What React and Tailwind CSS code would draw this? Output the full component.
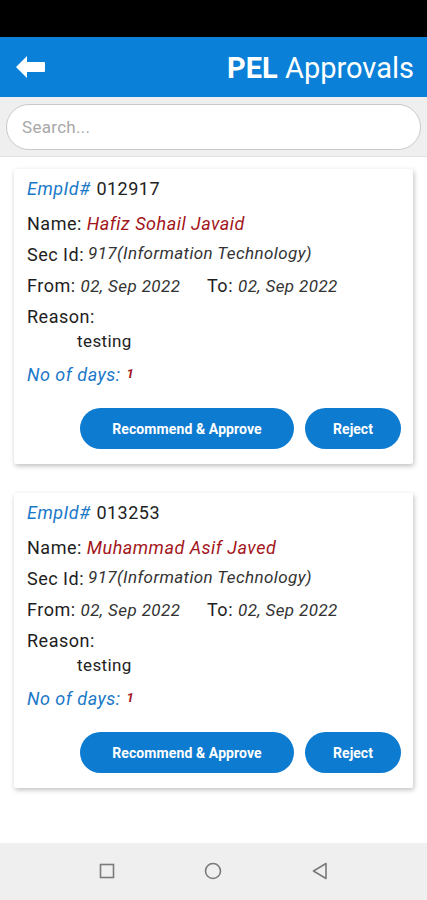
import React from "react";

const ITEMS = [
  { id: "012917", name: "Hafiz Sohail Javaid" },
  { id: "013253", name: "Muhammad Asif Javed" },
];

function BackArrow() {
  return (
    <svg width="29" height="22" viewBox="0 0 29 22" aria-hidden="true">
      <path d="M0 11 L11 0 L11 6 L28 6 Q29 6 29 7 L29 15 Q29 16 28 16 L11 16 L11 22 Z" fill="#fff" />
    </svg>
  );
}

function ApprovalCard({ id, name }) {
  return (
    <div className="mx-[14px] bg-white rounded-[2px] shadow-[1px_2px_5px_rgba(0,0,0,0.25)] pl-[13px] pr-[12px] pt-[8px] pb-[15px]">
      <div className="h-[22px] flex items-center text-[18px] tracking-[0.5px] text-[#222]">
        <span className="italic text-[#1a78c8]">EmpId#</span>
        <span className="ml-[6px]">{id}</span>
      </div>
      <div className="mt-[13px] h-[22px] flex items-center text-[18px] tracking-[0.5px] text-[#1e1e1e]">
        <span>Name:</span>
        <span className="ml-[5px] italic text-[#a3151b]">{name}</span>
      </div>
      <div className="mt-[9px] h-[22px] flex items-center text-[18px] tracking-[0.5px] text-[#1e1e1e]">
        <span>Sec Id:</span>
        <span className="ml-[4px] italic text-[17px] tracking-[0.4px] text-[#333]">917(Information Technology)</span>
      </div>
      <div className="mt-[10px] h-[22px] flex items-center text-[18px] tracking-[0.5px] text-[#1e1e1e]">
        <span className="w-[180px]">
          From: <span className="italic text-[17px] tracking-[0.4px] text-[#333]">02, Sep 2022</span>
        </span>
        <span>
          To: <span className="italic text-[17px] tracking-[0.4px] text-[#333]">02, Sep 2022</span>
        </span>
      </div>
      <div className="mt-[8px] h-[22px] flex items-center text-[18px] tracking-[0.5px] text-[#1e1e1e]">Reason:</div>
      <div className="mt-[4px] h-[22px] flex items-center pl-[50px] text-[17px] tracking-[0.4px] text-[#222]">testing</div>
      <div className="mt-[10px] h-[22px] flex items-center text-[18px] tracking-[0.5px] italic text-[#1a78c8]">
        No of days:
        <span className="ml-[6px] text-[13px] font-bold text-[#a3151b]">1</span>
      </div>
      <div className="mt-[23px] flex justify-end gap-[11px]">
        <button className="w-[214px] h-[41px] pt-[2px] rounded-full bg-[#0d7bd0] text-white text-[14px] font-bold tracking-[0.1px]">
          Recommend &amp; Approve
        </button>
        <button className="w-[96px] h-[41px] pt-[2px] rounded-full bg-[#0d7bd0] text-white text-[14px] font-bold">
          Reject
        </button>
      </div>
    </div>
  );
}

export default function App() {
  return (
    <div className="w-[427px] h-[900px] flex flex-col bg-white font-['Roboto',sans-serif]">
      <div className="h-[37px] bg-black" />
      <header className="h-[60px] bg-[#0b80d8] flex items-center justify-between pl-[16px] pr-[13px]">
        <BackArrow />
        <h1 className="text-[29px] text-white leading-none pt-[3px]">
          <span className="font-bold">PEL</span> Approvals
        </h1>
      </header>
      <div className="h-[60px] bg-[#efefef] flex items-center px-[6px] border-b border-[#e2e2e2]">
        <input
          placeholder="Search..."
          className="w-full h-[46px] rounded-full bg-white border border-[#c9c9c9] px-[15px] text-[17px] tracking-[0.3px] placeholder:text-[#a8a8a8] outline-none"
        />
      </div>
      <main className="flex-1 pt-[12px] flex flex-col gap-[29px]">
        {ITEMS.map((it) => (
          <ApprovalCard key={it.id} {...it} />
        ))}
      </main>
      <nav className="h-[57px] bg-[#efefef] flex items-center justify-center gap-[89px] pb-[1px]">
        <svg width="16" height="16" viewBox="0 0 16 16">
          <rect x="1.5" y="1.5" width="13" height="13" fill="none" stroke="#7a7a7a" strokeWidth="1.6" />
        </svg>
        <svg width="18" height="18" viewBox="0 0 18 18">
          <circle cx="9" cy="9" r="7.5" fill="none" stroke="#7a7a7a" strokeWidth="1.6" />
        </svg>
        <svg width="18" height="18" viewBox="0 0 18 18">
          <path d="M15 1.5 L2.5 9 L15 16.5 Z" fill="none" stroke="#7a7a7a" strokeWidth="1.6" strokeLinejoin="round" />
        </svg>
      </nav>
    </div>
  );
}
